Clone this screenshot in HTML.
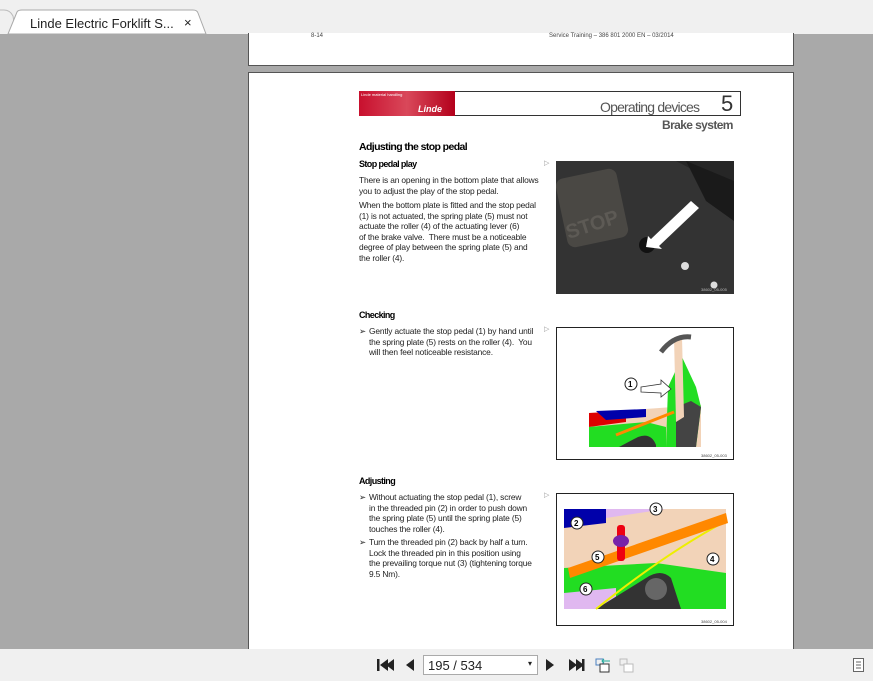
<!DOCTYPE html>
<html><head><meta charset="utf-8"><style>
*{margin:0;padding:0;box-sizing:border-box}
body{width:873px;height:681px;overflow:hidden;background:#a9a9a9;font-family:"Liberation Sans",sans-serif;position:relative}
.abs{position:absolute}
#tabs{left:0;top:0;width:873px;height:34px;background:#f0f0f0}
.pg{background:#fff;border:1px solid #555}
.t{font-size:8.4px;color:#222;line-height:10.5px;letter-spacing:-0.15px;white-space:nowrap}
.h{font-weight:bold;color:#000;letter-spacing:-0.6px}
.b{position:absolute;left:0}
#bar{left:0;top:649px;width:873px;height:32px;background:#f0f0f0}
</style></head><body>
<div id="tabs" class="abs">
 <svg class="abs" style="left:0;top:0" width="220" height="34">
  <path d="M0 10 L4 10 Q10 10 13 16 L16 34" fill="none" stroke="#bbb"/>
  <path d="M8 34 L17 12 Q18 10 22 10 L193 10 Q197 10 198 13 L206 34 Z" fill="#fff" stroke="#aaa"/>
 </svg>
 <div class="abs" style="left:30px;top:16px;font-size:13px;color:#222">Linde Electric Forklift S...</div>
 <div class="abs" style="left:184px;top:15px;font-size:13px;color:#222">×</div>
</div>
<div class="abs pg" style="left:248px;top:33px;width:546px;height:33px;border-top:none">
 <div class="abs" style="left:62px;top:0;font-size:6px;color:#444">8-14</div>
 <div class="abs" style="left:300px;top:0;font-size:6px;color:#444">Service Training – 386 801 2000 EN – 03/2014</div>
</div>
<div class="abs pg" style="left:248px;top:72px;width:546px;height:600px"></div>
<div class="abs" style="left:359px;top:91px;width:382px;height:25px;border:1px solid #333;background:#fff"></div>
<div class="abs" style="left:359px;top:91px;width:96px;height:25px;background:linear-gradient(90deg,#c8102e,#d9485a 50%,#b3001b)"></div>
<div class="abs" style="left:361px;top:92px;font-size:4px;color:#fff">Linde material handling</div>
<div class="abs" style="left:418px;top:104px;font-size:9px;color:#fff;font-style:italic;font-weight:bold">Linde</div>
<div class="abs" style="left:600px;top:99px;font-size:14px;color:#555;letter-spacing:-0.8px">Operating devices</div>
<div class="abs" style="left:721px;top:91px;font-size:22px;color:#333">5</div>
<div class="abs" style="left:662px;top:118px;font-size:12px;color:#555;font-weight:bold;letter-spacing:-0.6px">Brake system</div>
<div class="abs h" style="left:359px;top:141px;font-size:10.5px">Adjusting the stop pedal</div>
<div class="abs h" style="left:359px;top:159px;font-size:9px">Stop pedal play</div>
<div class="abs t" style="left:359px;top:175px">There is an opening in the bottom plate that allows<br>you to adjust the play of the stop pedal.</div>
<div class="abs t" style="left:359px;top:200px">When the bottom plate is fitted and the stop pedal<br>(1) is not actuated, the spring plate (5) must not<br>actuate the roller (4) of the actuating lever (6)<br>of the brake valve.&nbsp; There must be a noticeable<br>degree of play between the spring plate (5) and<br>the roller (4).</div>
<div class="abs" style="left:544px;top:159px;font-size:7px;color:#999">▷</div>
<div class="abs" style="left:544px;top:325px;font-size:7px;color:#999">▷</div>
<div class="abs" style="left:544px;top:491px;font-size:7px;color:#999">▷</div>
<svg class="abs" style="left:556px;top:161px" width="178" height="133">
 <rect width="178" height="133" fill="#262626"/>
 <path d="M0 0 L120 0 L178 30 L178 133 L0 133Z" fill="#333"/>
 <path d="M130 0 L178 20 L178 60 L150 40Z" fill="#1a1a1a"/>
 <rect x="5" y="12" width="62" height="70" rx="8" fill="#4a4844" transform="rotate(-12 36 47)"/>
 <text x="8" y="70" font-size="20" font-weight="bold" fill="#5d5a55" transform="rotate(-18 36 60)" font-family="Liberation Sans">STOP</text>
 <circle cx="91" cy="84" r="8" fill="#111"/>
 <path d="M95 78 L135 40 L143 47 L103 85 L106 88 L90 86 L92 75Z" fill="#fff"/>
 <circle cx="129" cy="105" r="4" fill="#ddd"/><circle cx="158" cy="124" r="3.5" fill="#ddd"/>
 <text x="145" y="130" font-size="4" fill="#bbb">38602_05-005</text>
</svg>
<div class="abs h" style="left:359px;top:310px;font-size:9px">Checking</div>
<div class="abs t" style="left:359px;top:326px;padding-left:10px"><span class="b">➢</span>Gently actuate the stop pedal (1) by hand until<br>the spring plate (5) rests on the roller (4).&nbsp; You<br>will then feel noticeable resistance.</div>
<svg class="abs" style="left:556px;top:327px" width="178" height="133">
 <rect x=".5" y=".5" width="177" height="132" fill="#fff" stroke="#222"/>
 <path d="M33 86 L145 78 L145 120 L33 120Z" fill="#f2d3b8"/>
 <path d="M33 86 L70 84 L70 95 L33 100Z" fill="#d00"/>
 <path d="M40 84 L90 82 L90 90 L50 93Z" fill="#00a"/>
 <path d="M126 30 L140 60 L145 80 L140 120 L110 120 L112 60Z" fill="#22dd22"/>
 <path d="M33 100 L90 95 L110 100 L110 120 L33 120Z" fill="#22dd22"/>
 <path d="M63 120 L82 110 Q95 105 100 118 L100 120Z" fill="#333"/>
 <path d="M120 80 L135 74 L145 80 L140 120 L120 120Z" fill="#444"/>
 <path d="M118 10 L126 10 L128 90 L120 95Z" fill="#f2d3b8"/>
 <path d="M105 25 Q118 8 135 10" stroke="#555" stroke-width="5" fill="none"/>
 <path d="M60 108 L118 85" stroke="#f80" stroke-width="3"/>
 <path d="M85 60 L105 57 L105 53 L115 62 L105 70 L105 66 L85 65Z" fill="#fff" stroke="#333" stroke-width=".8"/>
 <circle cx="75" cy="57" r="6" fill="#fff" stroke="#222"/><text x="72" y="60" font-size="8" font-weight="bold">1</text>
 <text x="145" y="130" font-size="4" fill="#444">38602_05-003</text>
</svg>
<div class="abs h" style="left:359px;top:476px;font-size:9px">Adjusting</div>
<div class="abs t" style="left:359px;top:492px;padding-left:10px"><span class="b">➢</span>Without actuating the stop pedal (1), screw<br>in the threaded pin (2) in order to push down<br>the spring plate (5) until the spring plate (5)<br>touches the roller (4).</div>
<div class="abs t" style="left:359px;top:537px;padding-left:10px"><span class="b">➢</span>Turn the threaded pin (2) back by half a turn.<br>Lock the threaded pin in this position using<br>the prevailing torque nut (3) (tightening torque<br>9.5 Nm).</div>
<svg class="abs" style="left:556px;top:493px" width="178" height="133">
 <rect x=".5" y=".5" width="177" height="132" fill="#fff" stroke="#222"/>
 <rect x="8" y="16" width="162" height="100" fill="#f2d3b8"/>
 <path d="M8 16 L50 16 L50 30 L8 35Z" fill="#00a"/>
 <path d="M50 16 L110 16 L50 25Z" fill="#e0b8f0"/>
 <path d="M8 75 L100 70 L170 80 L170 116 L8 116Z" fill="#22dd22"/>
 <path d="M8 100 L60 95 L60 116 L8 116Z" fill="#e0b8f0"/>
 <path d="M40 116 L90 85 Q105 75 115 85 L125 116Z" fill="#333"/>
 <circle cx="100" cy="96" r="11" fill="#666"/>
 <path d="M40 116 Q110 60 170 28" stroke="#ee0" stroke-width="2" fill="none"/>
 <path d="M12 75 L170 20 L172 30 L14 85Z" fill="#f80"/>
 <rect x="61" y="32" width="8" height="36" rx="3" fill="#e01"/>
 <ellipse cx="65" cy="48" rx="8" ry="6" fill="#72a"/>
 <circle cx="21" cy="30" r="6" fill="#fff" stroke="#222"/><text x="18" y="33" font-size="8" font-weight="bold">2</text>
 <circle cx="100" cy="16" r="6" fill="#fff" stroke="#222"/><text x="97" y="19" font-size="8" font-weight="bold">3</text>
 <circle cx="42" cy="64" r="6" fill="#fff" stroke="#222"/><text x="39" y="67" font-size="8" font-weight="bold">5</text>
 <circle cx="157" cy="66" r="6" fill="#fff" stroke="#222"/><text x="154" y="69" font-size="8" font-weight="bold">4</text>
 <circle cx="30" cy="96" r="6" fill="#fff" stroke="#222"/><text x="27" y="99" font-size="8" font-weight="bold">6</text>
 <text x="145" y="130" font-size="4" fill="#444">38602_05-004</text>
</svg>
<div id="bar" class="abs">
 <svg class="abs" style="left:374px;top:8px" width="270" height="16">
  <rect x="3" y="2" width="2.5" height="12" fill="#222"/><path d="M14 2 L6 8 L14 14Z M20 2 L12 8 L20 14Z" fill="#222"/>
  <path d="M40 2 L32 8 L40 14Z" fill="#222"/>
  <path d="M172 2 L180 8 L172 14Z" fill="#222"/>
  <path d="M195 2 L203 8 L195 14Z M202 2 L210 8 L202 14Z" fill="#222"/><rect x="208" y="2" width="2.5" height="12" fill="#222"/>
  <rect x="222" y="2" width="7" height="6" fill="none" stroke="#4a7fc0"/><rect x="226" y="7" width="9" height="8" fill="#fff" stroke="#333"/><path d="M228 4 L236 4 M230 2 L228 4 L230 6" stroke="#2a9" fill="none"/>
  <rect x="246" y="2" width="7" height="6" fill="none" stroke="#bbb"/><rect x="250" y="7" width="9" height="8" fill="#fff" stroke="#bbb"/>
 </svg>
 <div class="abs" style="left:423px;top:6px;width:115px;height:20px;border:1px solid #aaa;background:#fff;font-size:13px;padding:2px 0 0 4px;color:#222">195 / 534<span style="position:absolute;right:5px;top:3px;font-size:8px">▾</span></div>
 <svg class="abs" style="left:853px;top:9px" width="11" height="14"><rect x=".5" y=".5" width="10" height="13" fill="#fff" stroke="#666"/><path d="M3 4H8M3 7H8M3 10H8" stroke="#666"/></svg>
</div>
</body></html>
